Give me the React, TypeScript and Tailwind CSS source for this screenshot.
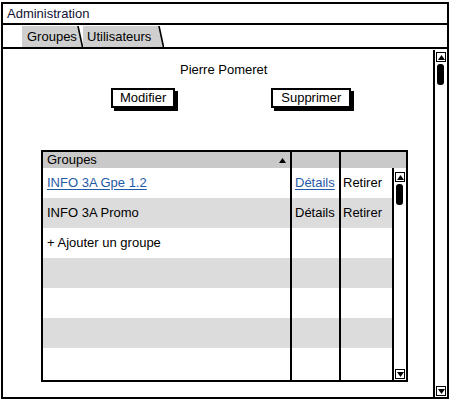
const UpArrow = () => (
  <svg width="7" height="5" viewBox="0 0 7 5">
    <polygon points="3.5,0 7,5 0,5" fill="#000" />
  </svg>
);

const DownArrow = () => (
  <svg width="7" height="5" viewBox="0 0 7 5">
    <polygon points="0,0 7,0 3.5,5" fill="#000" />
  </svg>
);

const Slant = () => (
  <svg width="6" height="21" viewBox="0 0 6 21" className="block">
    <polygon points="0,0 1,0 6,21 0,21" fill="#cfcfcf" />
    <line x1="1" y1="0" x2="5.5" y2="21" stroke="#000" strokeWidth="1.6" />
  </svg>
);

const Scrollbar = ({ className }: { className?: string }) => (
  <div className={"w-[14px] border-l-2 border-black flex flex-col bg-white " + (className ?? "")}>
    <div className="mx-[1px] mt-[2px] h-[10px] border-[1.5px] border-black flex items-center justify-center">
      <UpArrow />
    </div>
    <div className="ml-[2px] mt-[2px] w-[7px] h-[21px] bg-black rounded-[3px]" />
    <div className="flex-1" />
    <div className="mx-[1px] mb-[1px] h-[10px] border-[1.5px] border-black flex items-center justify-center">
      <DownArrow />
    </div>
  </div>
);

type Row = { name?: string; link?: boolean; details?: boolean; detailsLink?: boolean };

const rows: Row[] = [
  { name: "INFO 3A Gpe 1.2", link: true, details: true, detailsLink: true },
  { name: "INFO 3A Promo", details: true },
  { name: "+ Ajouter un groupe" },
  {},
  {},
  {},
  {},
];

export default function App() {
  return (
    <div
      className="w-[450px] h-[400px] bg-white pt-[2px] pl-[1px] text-[13px] leading-[16px] text-black"
      style={{ fontFamily: '"Liberation Sans", Arial, sans-serif' }}
    >
      <div className="w-[448px] h-[397px] border-2 border-black flex flex-col">
        <div className="h-[21px] shrink-0 border-b-2 border-black flex items-center pl-[4px] text-[#111133]">
          Administration
        </div>

        <div className="h-[24px] shrink-0 border-b-2 border-black flex items-end pl-[19px]">
          <div className="flex h-[21px]">
            <div className="bg-[#cfcfcf] pl-[5px] w-[55px] flex items-center">Groupes</div>
            <Slant />
          </div>
          <div className="flex h-[21px]">
            <div className="bg-[#cfcfcf] pl-[4px] w-[75px] flex items-center">Utilisateurs</div>
            <Slant />
          </div>
        </div>

        <div className="flex-1 flex min-h-0">
          <div className="flex-1 flex flex-col">
            <div className="pt-[13px] pl-[177px]">Pierre Pomeret</div>

            <div className="flex mt-[10px]">
              <button className="ml-[108px] h-[20px] px-[7px] border-2 border-black bg-white shadow-[3px_3px_0_#000] leading-[16px]">
                Modifier
              </button>
              <button className="ml-[96px] h-[20px] px-[8px] border-2 border-black bg-white shadow-[3px_3px_0_#000] leading-[16px]">
                Supprimer
              </button>
            </div>

            <div className="ml-[38px] mt-[42px] w-[367px] h-[232px] border-2 border-black flex flex-col">
              <div className="h-[16px] flex bg-[#c9c9c9]">
                <div className="w-[249px] border-r-2 border-black pl-[4px] pr-[4px] flex items-center justify-between">
                  <span>Groupes</span>
                  <UpArrow />
                </div>
                <div className="w-[49px] border-r-2 border-black" />
                <div className="flex-1" />
              </div>

              <div className="flex-1 flex min-h-0">
                <div className="flex-1 flex flex-col">
                  {rows.map((r, i) => (
                    <div key={i} className={"h-[30px] flex " + (i % 2 === 1 ? "bg-[#dcdcdc]" : "bg-white")}>
                      <div className="w-[249px] border-r-2 border-black pl-[4px] flex items-center">
                        {r.name && (
                          <span className={r.link ? "text-[#1f5aa6] underline underline-offset-2" : ""}>{r.name}</span>
                        )}
                      </div>
                      <div className="w-[49px] border-r-2 border-black pl-[3px] flex items-center">
                        {r.details && (
                          <span className={r.detailsLink ? "text-[#1f5aa6] underline underline-offset-2" : ""}>
                            Détails
                          </span>
                        )}
                      </div>
                      <div className="flex-1 pl-[2px] flex items-center">{r.details && "Retirer"}</div>
                    </div>
                  ))}
                  <div className="flex-1 flex">
                    <div className="w-[249px] border-r-2 border-black" />
                    <div className="w-[49px] border-r-2 border-black" />
                  </div>
                </div>
                <Scrollbar className="pt-[2px]" />
              </div>
            </div>
          </div>

          <Scrollbar className="mt-[1px]" />
        </div>
      </div>
    </div>
  );
}
